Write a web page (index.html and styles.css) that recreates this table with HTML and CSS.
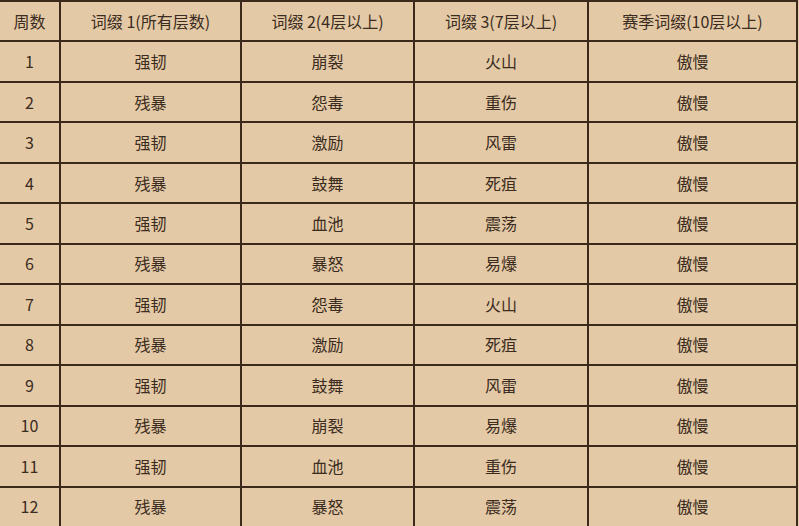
FILE: index.html
```html
<!DOCTYPE html>
<html lang="zh">
<head>
<meta charset="utf-8">
<link rel="stylesheet" href="styles.css">
</head>
<body>
<div class="table">
  <div class="cell">周数</div><div class="cell">词缀 1(所有层数)</div><div class="cell">词缀 2(4层以上)</div><div class="cell">词缀 3(7层以上)</div><div class="cell">赛季词缀(10层以上)</div>
  <div class="cell">1</div><div class="cell">强韧</div><div class="cell">崩裂</div><div class="cell">火山</div><div class="cell">傲慢</div>
  <div class="cell">2</div><div class="cell">残暴</div><div class="cell">怨毒</div><div class="cell">重伤</div><div class="cell">傲慢</div>
  <div class="cell">3</div><div class="cell">强韧</div><div class="cell">激励</div><div class="cell">风雷</div><div class="cell">傲慢</div>
  <div class="cell">4</div><div class="cell">残暴</div><div class="cell">鼓舞</div><div class="cell">死疽</div><div class="cell">傲慢</div>
  <div class="cell">5</div><div class="cell">强韧</div><div class="cell">血池</div><div class="cell">震荡</div><div class="cell">傲慢</div>
  <div class="cell">6</div><div class="cell">残暴</div><div class="cell">暴怒</div><div class="cell">易爆</div><div class="cell">傲慢</div>
  <div class="cell">7</div><div class="cell">强韧</div><div class="cell">怨毒</div><div class="cell">火山</div><div class="cell">傲慢</div>
  <div class="cell">8</div><div class="cell">残暴</div><div class="cell">激励</div><div class="cell">死疽</div><div class="cell">傲慢</div>
  <div class="cell">9</div><div class="cell">强韧</div><div class="cell">鼓舞</div><div class="cell">风雷</div><div class="cell">傲慢</div>
  <div class="cell">10</div><div class="cell">残暴</div><div class="cell">崩裂</div><div class="cell">易爆</div><div class="cell">傲慢</div>
  <div class="cell">11</div><div class="cell">强韧</div><div class="cell">血池</div><div class="cell">重伤</div><div class="cell">傲慢</div>
  <div class="cell">12</div><div class="cell">残暴</div><div class="cell">暴怒</div><div class="cell">震荡</div><div class="cell">傲慢</div>
</div>
</body>
</html>
```
FILE: styles.css
```css
html, body {
  margin: 0;
  padding: 0;
  background: #e4c9a6;
}
.table {
  width: 798px;
  height: 526px;
  box-sizing: border-box;
  display: grid;
  grid-template-columns: 59px 179px 171px 172px 207px;
  grid-template-rows: repeat(13, 1fr);
  gap: 2px;
  background: #3b2a1b;
  border-top: 2px solid #3b2a1b;
  border-right: 2px solid #3b2a1b;
}
.cell {
  background: #e4c9a6;
  display: flex;
  align-items: center;
  justify-content: center;
  font-family: "Noto Sans CJK SC", "Noto Sans", sans-serif;
  font-size: 16px;
  color: #3a2c20;
  padding-bottom: 1px;
}
```
